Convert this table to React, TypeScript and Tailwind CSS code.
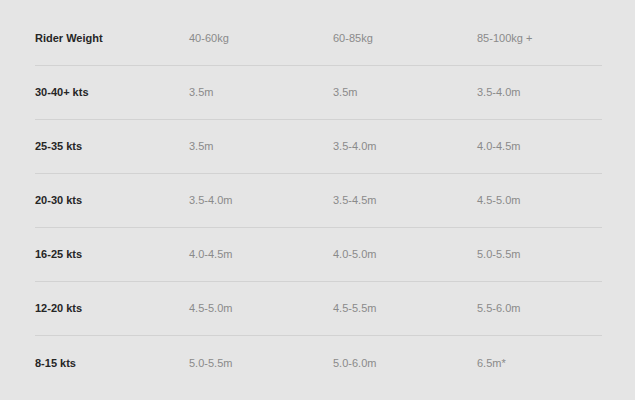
import React from "react";

const rows: [string, string, string, string][] = [
  ["Rider Weight", "40-60kg", "60-85kg", "85-100kg +"],
  ["30-40+ kts", "3.5m", "3.5m", "3.5-4.0m"],
  ["25-35 kts", "3.5m", "3.5-4.0m", "4.0-4.5m"],
  ["20-30 kts", "3.5-4.0m", "3.5-4.5m", "4.5-5.0m"],
  ["16-25 kts", "4.0-4.5m", "4.0-5.0m", "5.0-5.5m"],
  ["12-20 kts", "4.5-5.0m", "4.5-5.5m", "5.5-6.0m"],
  ["8-15 kts", "5.0-5.5m", "5.0-6.0m", "6.5m*"],
];

export default function App() {
  return (
    <div
      className="w-[635px] h-[400px] bg-[#e5e5e5] pt-[12px] pl-[35px] overflow-hidden"
      style={{ fontFamily: '"Liberation Sans", Arial, sans-serif' }}
    >
      <div className="w-[567px] flex flex-col">
        {rows.map((r, i) => (
          <div
            key={i}
            className={`grid grid-cols-[154px_144px_144px_125px] items-center h-[54px] text-[11px] ${
              i < rows.length - 1 ? "border-b border-[#d2d2d2]" : ""
            }`}
          >
            <div className="font-bold text-[#262626]">{r[0]}</div>
            <div className="text-[#8a8a8a]">{r[1]}</div>
            <div className="text-[#8a8a8a]">{r[2]}</div>
            <div className="text-[#8a8a8a]">{r[3]}</div>
          </div>
        ))}
      </div>
    </div>
  );
}
